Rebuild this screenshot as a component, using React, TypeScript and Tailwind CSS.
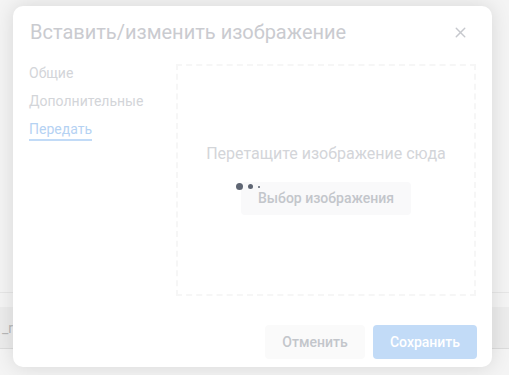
import { X } from "lucide-react";

const tabs = ["Общие", "Дополнительные", "Передать"];

export default function App() {
  return (
    <div
      className="relative h-[375px] w-[509px] overflow-hidden bg-[#f4f4f4]"
      style={{ fontFamily: "Roboto, 'Noto Sans', sans-serif" }}
    >
      {/* page behind the overlay */}
      <div className="mt-[292px] border-t border-[#e6e6e6]" />
      <div className="mt-[14px] h-[42px] border-b border-[#dcdcdc] bg-[#ececec] pl-[2px] pt-[14px] text-[14px] leading-none text-[#b8b8b8]">
        _r
      </div>

      {/* dialog */}
      <div className="absolute left-[13px] top-[6px] flex h-[361px] w-[479px] flex-col rounded-[10px] bg-white shadow-[0_0_20px_rgba(0,0,0,0.12)]">
        <div className="flex items-center justify-between pl-[17px] pr-[23px] pt-[13px]">
          <h1 className="text-[20px] leading-[26px] text-[#cacbd0]">
            Вставить/изменить изображение
          </h1>
          <X className="h-[17px] w-[17px] text-[#c6c8cd]" strokeWidth={2} />
        </div>

        <div className="flex flex-1 pl-[16px] pr-[16px] pt-[19px]">
          <nav className="flex w-[147px] flex-col gap-[11px] pt-[1px]">
            {tabs.map((t, i) => (
              <span
                key={t}
                className={
                  i === 2
                    ? "w-fit border-b-2 border-[#c2dbf7] pb-[1px] text-[14px] leading-[17px] text-[#b5d2f3]"
                    : "text-[14px] leading-[17px] text-[#d3d5d9]"
                }
              >
                {t}
              </span>
            ))}
          </nav>

          <div className="flex h-[232px] w-[300px] flex-col items-center border-2 border-dashed border-[#f6f6f6] pt-[77px]">
            <p className="text-[16px] leading-[22px] text-[#d3d5d9]">
              Перетащите изображение сюда
            </p>
            <div className="relative mt-[17px]">
              <div className="flex h-[33px] w-[170px] items-center justify-center rounded-[4px] bg-[#f9f9fa] text-[14px] font-medium text-[#c3c6cb]">
                Выбор изображения
              </div>
              <div className="absolute left-[-5px] top-[1px] flex items-center gap-[5px]">
                <span className="h-[7px] w-[7px] rounded-full bg-[#5f6673]" />
                <span className="h-[5px] w-[5px] rounded-full bg-[#5f6673]" />
                <span className="h-[2px] w-[2px] rounded-full bg-[#5f6673]" />
              </div>
            </div>
          </div>
        </div>

        <div className="flex justify-end gap-[8px] pb-[8px] pr-[15px]">
          <button className="h-[34px] w-[100px] rounded-[4px] bg-[#fafafa] text-[14px] font-medium text-[#c3c6cb]">
            Отменить
          </button>
          <button className="h-[34px] w-[104px] rounded-[4px] bg-[#c2dbf7] text-[14px] font-medium text-white">
            Сохранить
          </button>
        </div>
      </div>
    </div>
  );
}
